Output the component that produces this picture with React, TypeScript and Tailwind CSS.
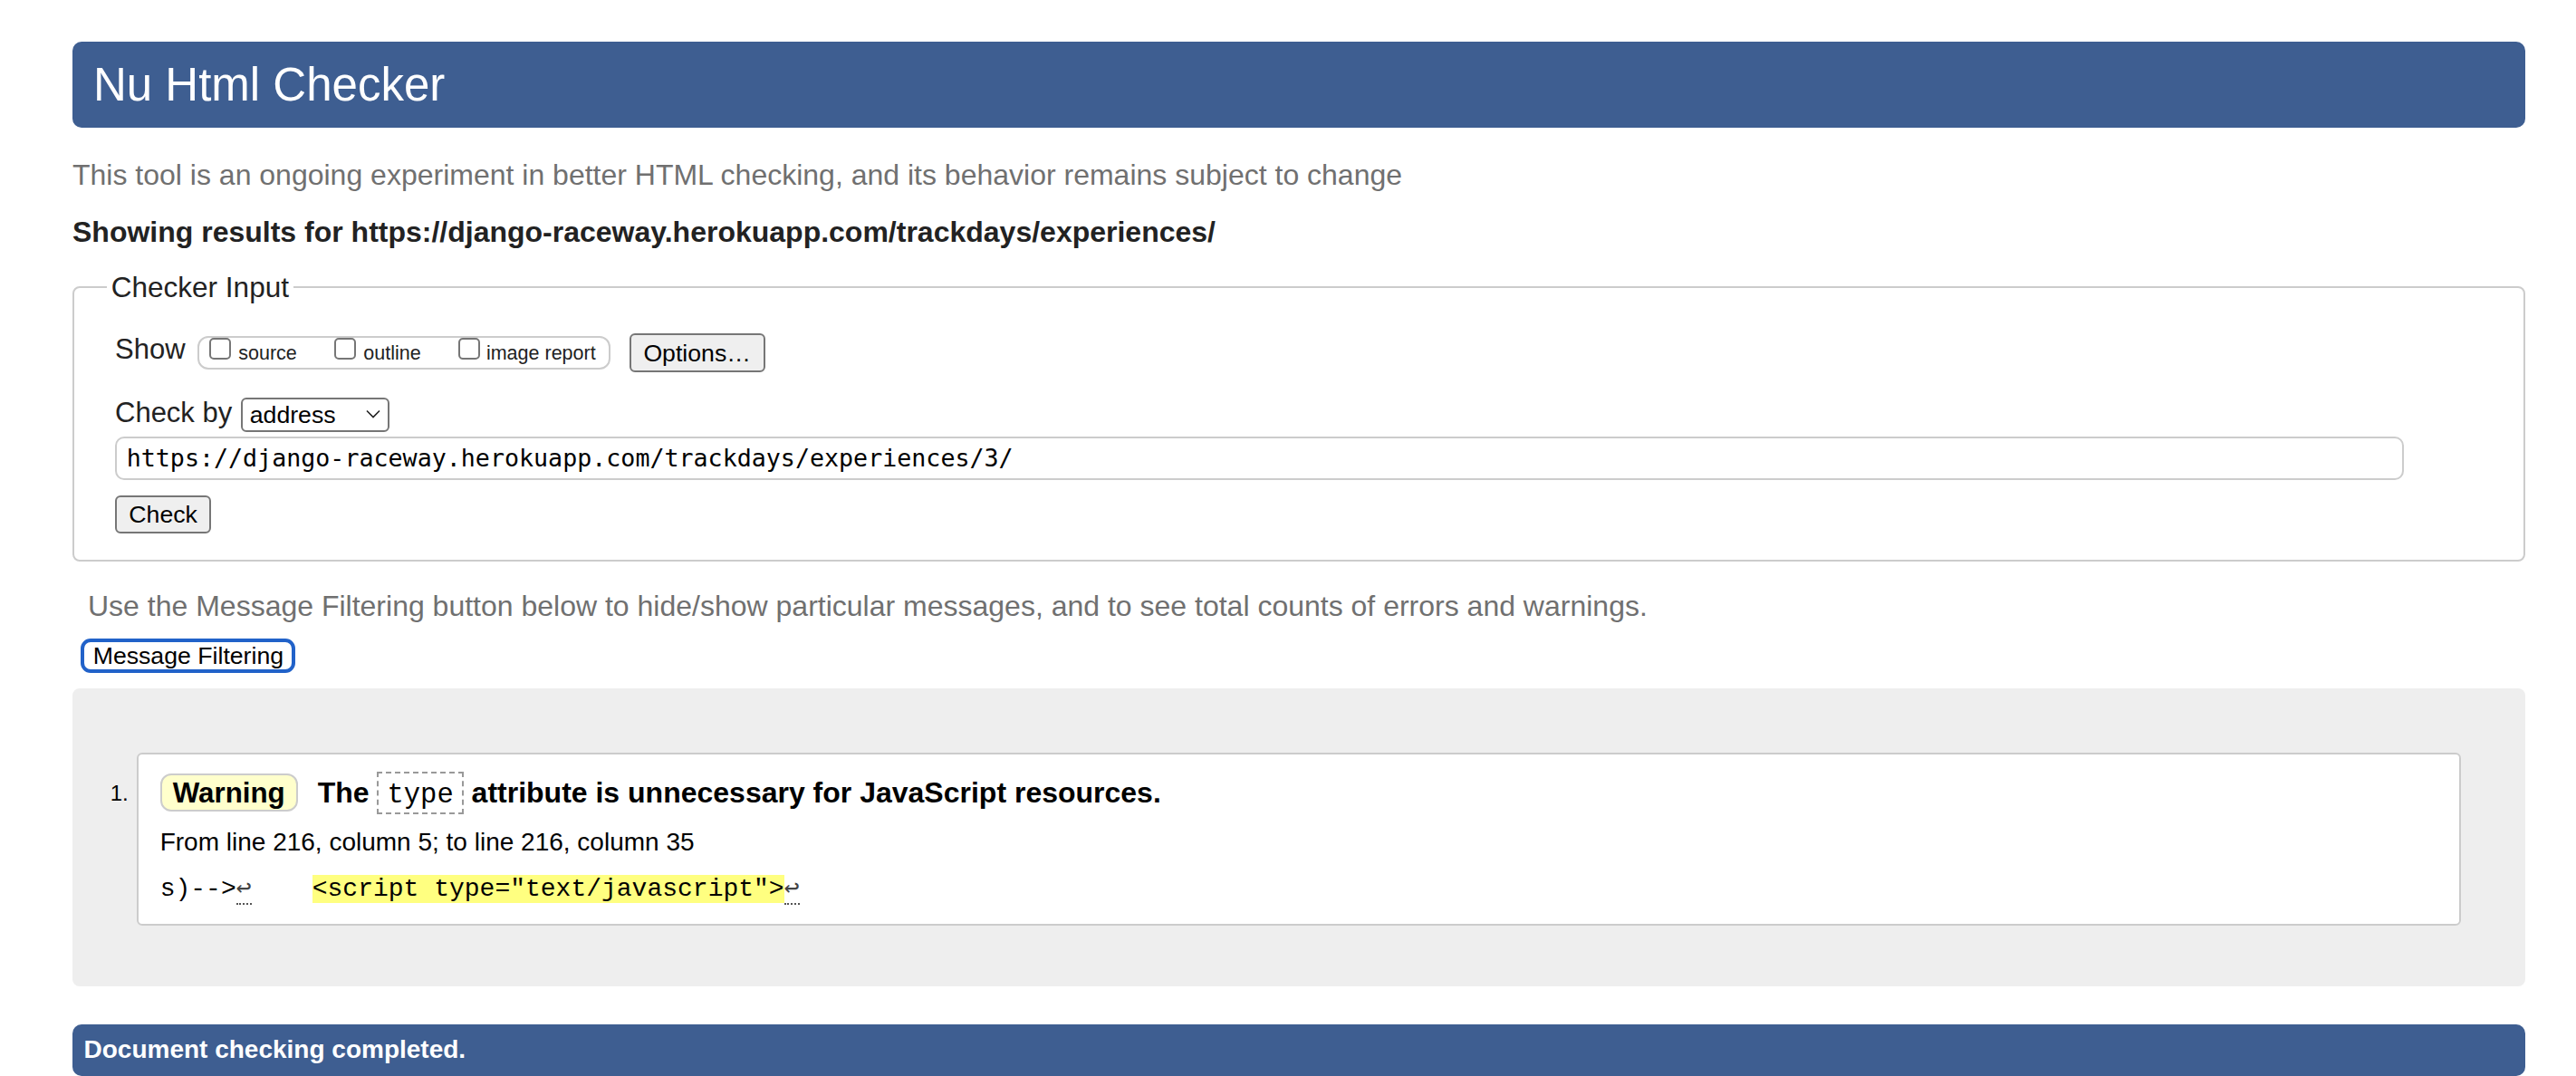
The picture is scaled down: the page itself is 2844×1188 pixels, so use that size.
import React from "react";

const sans = "font-['Liberation_Sans',Arial,Helvetica,sans-serif]";

function Checkbox() {
  return <span className="block h-6 w-6 shrink-0 rounded-[5px] border-2 border-[#767676] bg-white" />;
}

export default function App() {
  return (
    <div className={`${sans} min-h-screen bg-white pl-[80px] pr-[56px] pt-[46px] text-[#222]`}>
      <h1 className="rounded-[10px] bg-[#3e5e91] py-[17.5px] pl-[23px] text-[51px] font-normal leading-[60px] text-white">
        Nu Html Checker
      </h1>

      <p className="mt-[34px] text-[32px] leading-[36px] text-[#707070]">
        This tool is an ongoing experiment in better HTML checking, and its behavior remains subject to change
      </p>

      <p className="mt-[26.7px] text-[32px] font-bold leading-[36px] text-[#222]">
        Showing results for https://django-raceway.herokuapp.com/trackdays/experiences/
      </p>

      <fieldset className="mt-[25.5px] rounded-[8px] border-2 border-[#cccccc] pb-[29px] pl-[45px]">
        <legend className="ml-[-9.2px] px-[5px] text-[31.5px] leading-[36px] text-[#222]">Checker Input</legend>

        <div className="mt-[33.2px] flex items-start">
          <span className="text-[31px] leading-[36px]">Show</span>
          <div className="ml-[13.4px] mt-[2.4px] flex h-[37.6px] items-start rounded-[12px] border-2 border-[#cccccc] pl-[11.3px] pr-[14px]">
            <span className="flex items-start">
              <Checkbox />
              <span className="ml-[8px] mt-[5px] text-[21.5px] leading-[24px] text-[#222]">source</span>
            </span>
            <span className="ml-[41px] flex items-start">
              <Checkbox />
              <span className="ml-[8.5px] mt-[5px] text-[21.5px] leading-[24px] text-[#222]">outline</span>
            </span>
            <span className="ml-[41px] flex items-start">
              <Checkbox />
              <span className="ml-[7.3px] mt-[5px] text-[21.5px] leading-[24px] text-[#222]">image report</span>
            </span>
          </div>
          <div className="ml-[21px] flex h-[42.4px] w-[150px] items-center justify-center rounded-[6px] border-2 border-[#767676] bg-[#efefef] text-[26.67px] leading-[30px] text-black">
            Options…
          </div>
        </div>

        <div className="mt-[27px] flex items-start">
          <span className="text-[31px] leading-[36px]">Check by</span>
          <div className="ml-[9.5px] mt-[1.3px] flex h-[37.7px] w-[164.7px] items-center justify-between rounded-[6px] border-2 border-[#767676] bg-white pl-[8px] pr-[8px]">
            <span className="text-[26.67px] leading-[30px] text-black">address</span>
            <svg width="16" height="10" viewBox="0 0 16 10" className="mt-[-2px]">
              <path d="M1 1.5 L8 8.5 L15 1.5" fill="none" stroke="#222" strokeWidth="1.6" />
            </svg>
          </div>
        </div>

        <div className="mt-[5px] flex h-[48.3px] w-[2526.6px] items-center rounded-[10px] border-2 border-[#cccccc] bg-white pl-[10.7px] font-['DejaVu_Sans_Mono',monospace] text-[26.67px] leading-[32px] text-black">
          https://django-raceway.herokuapp.com/trackdays/experiences/3/
        </div>

        <div className="mt-[17.3px] flex h-[41.7px] w-[106.3px] items-center justify-center rounded-[6px] border-2 border-[#767676] bg-[#efefef] text-[26.67px] leading-[30px] text-black">
          Check
        </div>
      </fieldset>

      <p className="ml-[17px] mt-[31px] text-[32px] leading-[36px] text-[#707070]">
        Use the Message Filtering button below to hide/show particular messages, and to see total counts of errors and warnings.
      </p>

      <div className="ml-[8.7px] mt-[18px] flex h-[38.3px] w-[237.3px] items-center rounded-[11px] border-[4px] border-[#2162c9] bg-white pl-[10px] text-[26.67px] leading-[30px] text-black">
        Message Filtering
      </div>

      <div className="mt-[16.7px] flex items-start rounded-[8px] bg-[#eeeeee] pb-[67.3px] pl-[41.7px] pr-[70.7px] pt-[70.7px]">
        <span className="mt-[33.7px] w-[29.3px] shrink-0 text-[24px] leading-[24px] text-black">1.</span>
        <div className="flex-1 rounded-[6px] border-2 border-[#cccccc] bg-white pb-[21.5px] pl-[23.7px] pt-[19px]">
          <div className="whitespace-nowrap text-[32px] font-bold leading-[36px] text-black">
            <span className="mr-[22px] inline-block rounded-[12px] border-2 border-[#cccccc] bg-[#ffffcc] px-[12px] pb-[0.8px] pt-[1.6px] text-[31.3px] leading-[36px]">
              Warning
            </span>
            The{" "}
            <code className="inline-block border-2 border-dashed border-[#999999] px-[9px] pb-[1.4px] pt-[5.9px] font-['Liberation_Mono',monospace] text-[30.5px] font-normal leading-[36px]">
              type
            </code>{" "}
            attribute is unnecessary for JavaScript resources.
          </div>
          <div className="mt-[14px] text-[28px] leading-[34px] text-black">
            From line 216, column 5; to line 216, column 35
          </div>
          <div className="mt-[19.2px] whitespace-pre font-['Liberation_Mono',monospace] text-[28px] leading-[32px] text-black">
            s)--&gt;<span className="border-b-2 border-dotted border-[#555] text-[#444]">↩</span>{"    "}
            <span className="bg-[#ffff80]">&lt;script type="text/javascript"&gt;</span>
            <span className="border-b-2 border-dotted border-[#555] text-[#444]">↩</span>
          </div>
        </div>
      </div>

      <div className="mt-[41.7px] rounded-[10px] bg-[#3e5e91] pb-[12px] pl-[12.5px] pt-[11.6px] text-[28px] font-bold leading-[34px] text-white">
        Document checking completed.
      </div>
    </div>
  );
}
